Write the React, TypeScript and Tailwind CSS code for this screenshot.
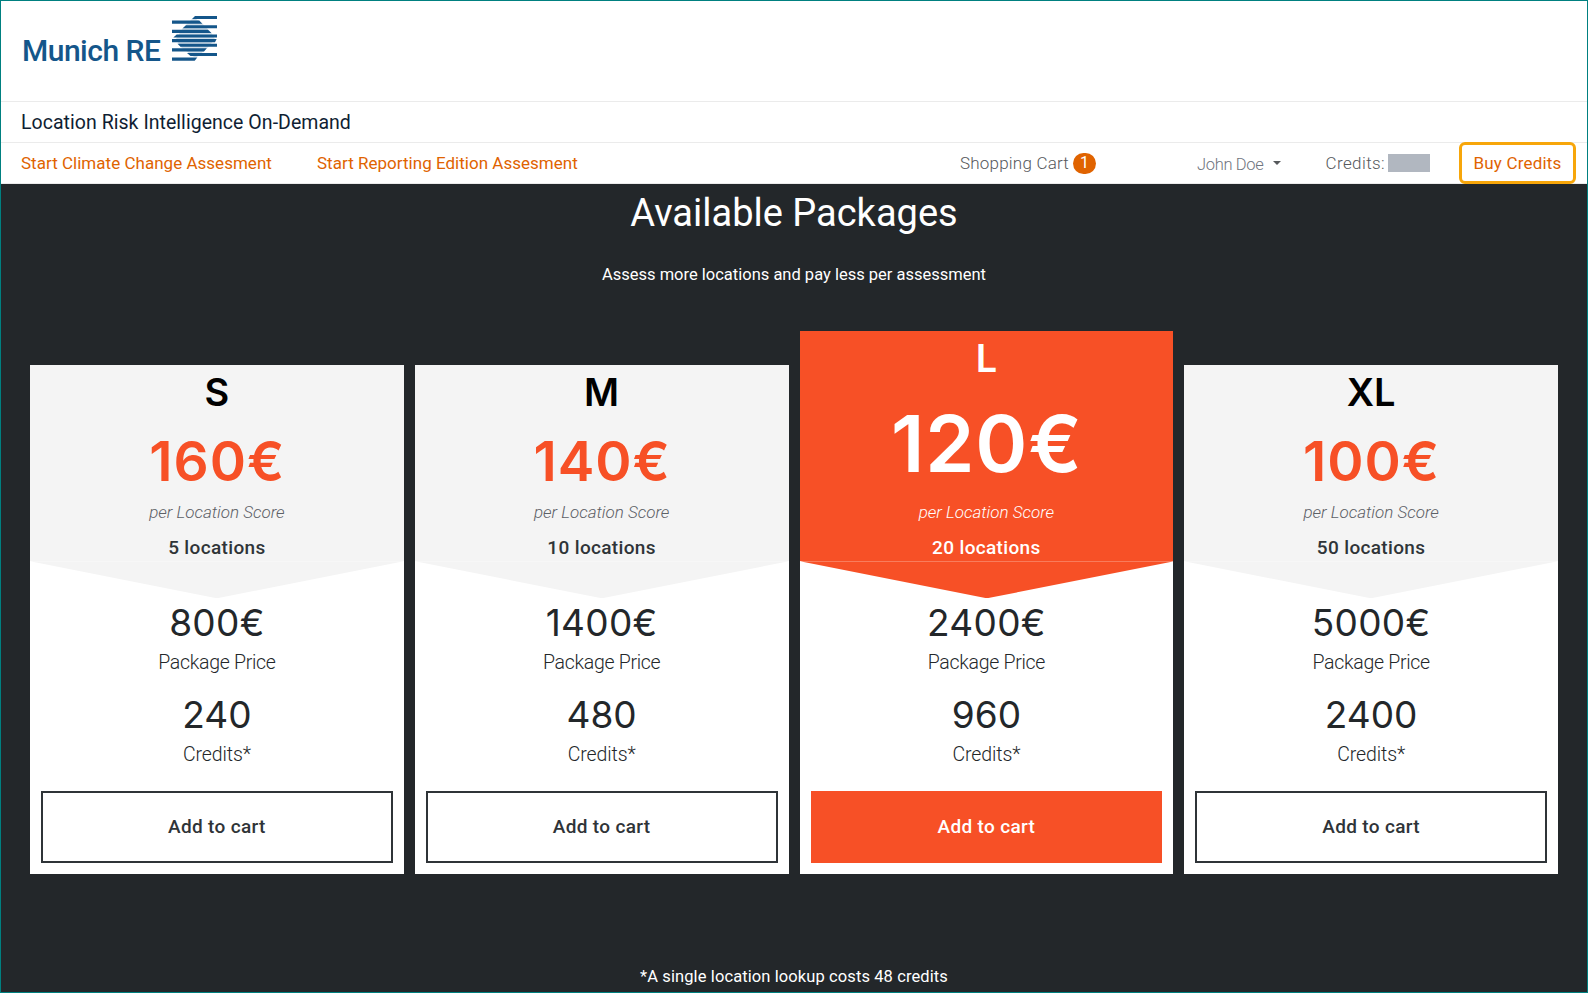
type Pack = {
  name: string;
  unit: string;
  locations: string;
  price: string;
  credits: string;
  featured?: boolean;
};

const packs: Pack[] = [
  { name: "S", unit: "160€", locations: "5 locations", price: "800€", credits: "240" },
  { name: "M", unit: "140€", locations: "10 locations", price: "1400€", credits: "480" },
  { name: "L", unit: "120€", locations: "20 locations", price: "2400€", credits: "960", featured: true },
  { name: "XL", unit: "100€", locations: "50 locations", price: "5000€", credits: "2400" },
];

function LogoMark() {
  return (
    <svg width="45" height="45" viewBox="0 0 45 45" fill="#14568a" aria-hidden="true">
      <path
        d="M20 3H24L30.3 7.6L39.4 16.9L43 23.2L34.8 32.4L25 41H22L8.5 30.8L4 23L10.7 12.3Z"
        fill="#d3e0ea"
      />
      <path d="M23 0H45V3H20Z" />
      <path d="M0 4.6H27.3L30.3 7.7H0Z" />
      <path d="M14 9.2H45V12.3H10.7Z" />
      <path d="M0 13.8H36L39.4 17H0Z" />
      <path d="M4.7 18.4H45V21.6H1.3Z" />
      <path d="M0 23.1H44.6L43 26.2H0Z" />
      <path d="M5.5 27.7H45V30.8H8.5Z" />
      <path d="M0 32.3H34.8L32 35.5H0Z" />
      <path d="M15 37H45V40.1H18.5Z" />
      <path d="M0 41.6H25.3L22.7 44.8H0Z" />
    </svg>
  );
}

function PackageCard({ pack }: { pack: Pack }) {
  const f = pack.featured;
  return (
    <article className="bg-white text-center">
      <div className={f ? "h-[230px] bg-[#f75026] text-white" : "h-[196px] bg-[#f4f4f4] text-[#2f3438]"}>
        <h2 className={`font-['Inter',sans-serif] text-[38px] leading-[54px] font-semibold ${f ? "text-white" : "text-black"}`}>
          {pack.name}
        </h2>
        <div
          className={
            f
              ? "mb-[2px] pl-px font-['Inter',sans-serif] text-[79px] leading-[116px] font-semibold tracking-[0.8px]"
              : "pl-px font-['Inter',sans-serif] text-[55px] leading-[84px] font-semibold tracking-[1px] text-[#f75026]"
          }
        >
          {pack.unit}
        </div>
        <div className={`text-[17px] leading-[19px] font-light italic ${f ? "" : "text-[#5c6066]"}`}>per Location Score</div>
        <div className="mt-[13px] text-[19px] leading-[26px] font-medium tracking-[0.35px]">{pack.locations}</div>
      </div>
      <svg
        className={`block h-[37px] w-full ${f ? "text-[#f75026]" : "text-[#f4f4f4]"}`}
        viewBox="0 0 100 37"
        preserveAspectRatio="none"
        fill="currentColor"
        aria-hidden="true"
      >
        <path d="M0 0.3H100L50 37.3Z" />
      </svg>
      <div className="px-[11px] pb-[11px] text-[#23272a]">
        <div className="pt-px font-['Inter',sans-serif] text-[37px] leading-[48px] tracking-[0.3px]">{pack.price}</div>
        <div className="text-[19.5px] leading-[32px] font-light tracking-[-0.3px]">Package Price</div>
        <div className="mt-3 font-['Inter',sans-serif] text-[37px] leading-[47px]">{pack.credits}</div>
        <div className="pt-px text-[19.5px] leading-[32px] font-light tracking-[-0.1px]">Credits*</div>
        <button
          className={`mt-5 block h-[72px] w-full border-2 text-[19px] font-medium tracking-[0.33px] ${
            f ? "border-[#f75026] bg-[#f75026] text-white" : "border-[#2f3438] bg-white text-[#2f3438]"
          }`}
        >
          Add to cart
        </button>
      </div>
    </article>
  );
}

export default function App() {
  return (
    <div className="flex h-[993px] flex-col border border-[#008080] bg-white font-['Roboto',sans-serif]">
      <header>
        <div className="flex h-[100px] items-start pt-[15px] pl-[21px]">
          <span className="mt-[15px] w-[150px] text-[30px] leading-[40px] font-medium tracking-[-0.5px] text-[#14568a]">Munich RE</span>
          <LogoMark />
        </div>
        <div className="flex h-[41px] items-center border-t border-[#ebebeb] pt-[2px] pl-5 text-[19.5px] tracking-[0.04px] text-[#0f1e33]">
          Location Risk Intelligence On-Demand
        </div>
        <nav className="flex h-[42px] items-center border-y border-[#ebebeb] pr-[11px] pl-5 text-[17px] text-[#e06300]">
          <a className="w-[296px] pt-[2px] tracking-[0.02px]">Start Climate Change Assesment</a>
          <a className="pt-[2px] tracking-[0.02px]">Start Reporting Edition Assesment</a>
          <div className="ml-auto flex items-center font-light text-[#56595c]">
            <span className="pt-[2px] tracking-[0.21px]">Shopping Cart</span>
            <span className="ml-[4px] flex h-[21px] w-[23px] items-center justify-center rounded-full bg-[#e06300] text-[16px] font-normal text-white">1</span>
            <span className="mt-[4px] ml-[101px] text-[16.5px] tracking-[-0.33px] text-[#707580]">John Doe</span>
            <svg className="ml-[10px]" width="8" height="4" viewBox="0 0 8 4" fill="#56595c" aria-hidden="true">
              <path d="M0 0H8L4 4Z" />
            </svg>
            <span className="ml-[44px] pt-[2px] tracking-[0.4px]">Credits:</span>
            <span className="ml-[3px] h-[18px] w-[42px] bg-[#b1b7c0]" />
            <a className="ml-[29px] flex h-[42px] w-[117px] items-center justify-center rounded-[6px] border-3 border-[#f7a60a] bg-white pt-[2px] font-normal tracking-[0.18px] text-[#e06300]">
              Buy Credits
            </a>
          </div>
        </nav>
      </header>
      <main className="flex-1 bg-[#23272a] px-[29px] text-white">
        <h1 className="mb-[3px] text-center text-[38px] leading-[58px]">Available Packages</h1>
        <p className="text-center text-[16.5px] leading-[60px]">Assess more locations and pay less per assessment</p>
        <section className="mt-[26px] grid grid-cols-4 items-end gap-[11px]">
          {packs.map((p) => (
            <PackageCard key={p.name} pack={p} />
          ))}
        </section>
        <p className="mt-[88px] text-center text-[16.5px] leading-[30px] tracking-[0.1px]">*A single location lookup costs 48 credits</p>
      </main>
    </div>
  );
}
